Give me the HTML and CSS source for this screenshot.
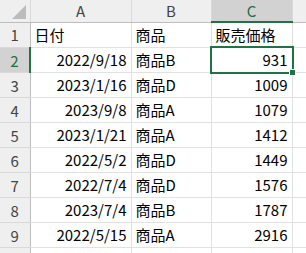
FILE: index.html
```html
<!DOCTYPE html>
<html lang="ja">
<head>
    <meta charset="UTF-8">
    <title>販売データ</title>
    <link rel="stylesheet" href="styles.css">
</head>
<body>
    <table class="sheet">
        <colgroup>
            <col class="col-rowhead">
            <col class="col-a">
            <col class="col-b">
            <col class="col-c">
            <col>
        </colgroup>
        <thead>
            <tr class="colheads">
                <th class="corner"><span class="corner-mark"></span></th>
                <th>A</th>
                <th>B</th>
                <th class="selected-col">C</th>
                <th></th>
            </tr>
        </thead>
        <tbody>
            <tr>
                <th class="rowhead">1</th>
                <td>日付</td>
                <td>商品</td>
                <td>販売価格</td>
                <td></td>
            </tr>
            <tr>
                <th class="rowhead selected-row">2</th>
                <td class="num">2022/9/18</td>
                <td>商品B</td>
                <td class="num active">931<span class="cursor"><span class="handle"></span></span></td>
                <td></td>
            </tr>
            <tr>
                <th class="rowhead">3</th>
                <td class="num">2023/1/16</td>
                <td>商品D</td>
                <td class="num">1009</td>
                <td></td>
            </tr>
            <tr>
                <th class="rowhead">4</th>
                <td class="num">2023/9/8</td>
                <td>商品A</td>
                <td class="num">1079</td>
                <td></td>
            </tr>
            <tr>
                <th class="rowhead">5</th>
                <td class="num">2023/1/21</td>
                <td>商品A</td>
                <td class="num">1412</td>
                <td></td>
            </tr>
            <tr>
                <th class="rowhead">6</th>
                <td class="num">2022/5/2</td>
                <td>商品D</td>
                <td class="num">1449</td>
                <td></td>
            </tr>
            <tr>
                <th class="rowhead">7</th>
                <td class="num">2022/7/4</td>
                <td>商品D</td>
                <td class="num">1576</td>
                <td></td>
            </tr>
            <tr>
                <th class="rowhead">8</th>
                <td class="num">2023/7/4</td>
                <td>商品B</td>
                <td class="num">1787</td>
                <td></td>
            </tr>
            <tr>
                <th class="rowhead">9</th>
                <td class="num">2022/5/15</td>
                <td>商品A</td>
                <td class="num">2916</td>
                <td></td>
            </tr>
            <tr>
                <th class="rowhead"></th>
                <td></td>
                <td></td>
                <td></td>
                <td></td>
            </tr>
        </tbody>
    </table>
</body>
</html>
```

FILE: styles.css
```css
body {
    margin: 0;
    background-color: #ffffff;
    font-family: "Noto Sans CJK JP", "Noto Sans", sans-serif;
    overflow: hidden;
}

.sheet {
    border-collapse: collapse;
    table-layout: fixed;
    width: 320px;
    font-size: 15px;
    color: #000000;
}

.col-rowhead {
    width: 30px;
}

.col-a {
    width: 101px;
}

.col-b {
    width: 80px;
}

.col-c {
    width: 81px;
}

.sheet td {
    height: 24px;
    padding: 0 4px;
    border: 1px solid #e1e1e1;
    white-space: nowrap;
    line-height: 24px;
}

.sheet td.num {
    text-align: right;
}

.colheads th {
    height: 21px;
    padding: 0;
    background-color: #efefef;
    border-right: 1px solid #d9d9d9;
    border-bottom: 1px solid #bdbdbd;
    font-weight: normal;
    font-size: 15px;
    color: #444444;
    line-height: 21px;
}

.colheads th.selected-col {
    background-color: #d2d2d2;
    color: #1e6e42;
    border-bottom: 2px solid #217346;
}

.corner {
    position: relative;
}

.corner-mark {
    position: absolute;
    right: 4px;
    bottom: 3px;
    width: 0;
    height: 0;
    border-left: 14px solid transparent;
    border-bottom: 14px solid #bcbcbc;
}

.rowhead {
    padding: 0;
    background-color: #efefef;
    border-right: 1px solid #bdbdbd;
    border-bottom: 1px solid #d9d9d9;
    font-weight: normal;
    color: #444444;
    text-align: center;
}

.rowhead.selected-row {
    background-color: #d2d2d2;
    color: #1e6e42;
    border-right: 2px solid #217346;
}

.active {
    position: relative;
}

.cursor {
    position: absolute;
    left: -2px;
    top: -2px;
    right: -2px;
    bottom: -2px;
    border: 2px solid #217346;
}

.handle {
    position: absolute;
    right: -4px;
    bottom: -4px;
    width: 5px;
    height: 5px;
    background-color: #217346;
    border: 1px solid #ffffff;
}
```
